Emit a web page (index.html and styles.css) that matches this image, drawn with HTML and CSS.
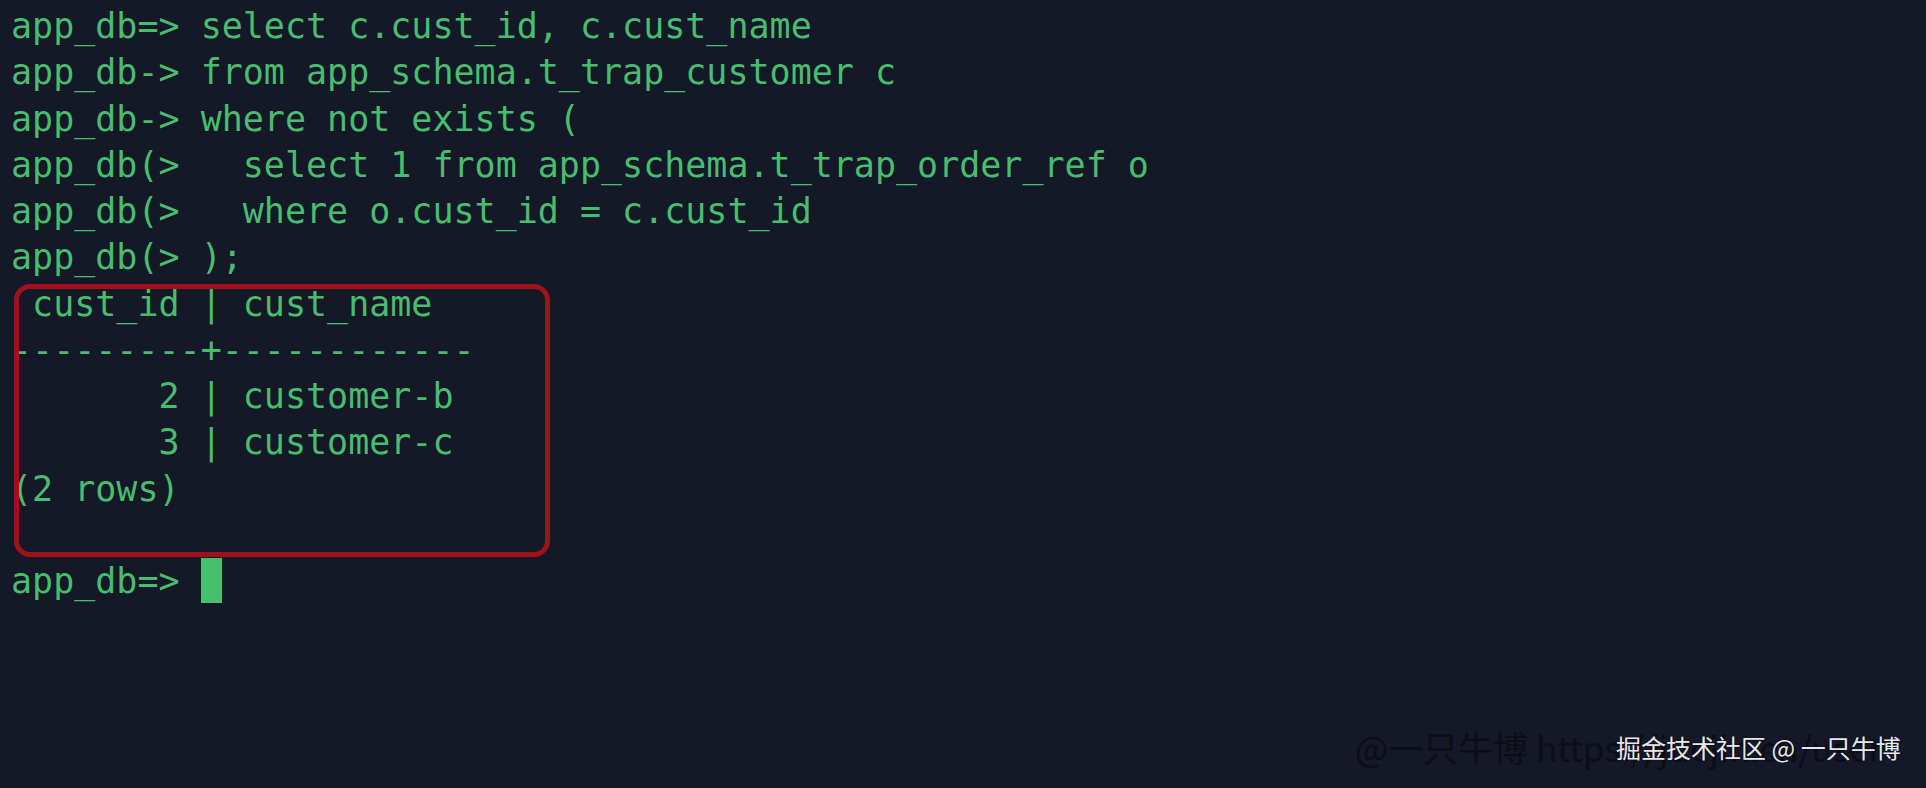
FILE: index.html
```html
<!DOCTYPE html>
<html lang="zh">
<head>
<meta charset="utf-8">
<title>psql</title>
<link rel="stylesheet" href="styles.css">
</head>
<body>
<main class="term">
<pre class="out">app_db=&gt; select c.cust_id, c.cust_name
app_db-&gt; from app_schema.t_trap_customer c
app_db-&gt; where not exists (
app_db(&gt;   select 1 from app_schema.t_trap_order_ref o
app_db(&gt;   where o.cust_id = c.cust_id
app_db(&gt; );
 cust_id | cust_name
---------+------------
       2 | customer-b
       3 | customer-c
(2 rows)

app_db=&gt; <span class="cursor"></span></pre>
<div class="highlight"></div>
<div class="wm-dark">@一只牛博 https://juejin.cn/user</div>
<div class="wm-light">掘金技术社区 @ 一只牛博</div>
</main>
</body>
</html>
```
FILE: styles.css
```css
html, body {
  margin: 0;
  padding: 0;
  background: #141827;
}
.term {
  position: relative;
  width: 1926px;
  height: 788px;
  overflow: hidden;
  background: #141827;
}
.out {
  margin: 0;
  padding: 3px 0 0 11px;
  font-family: "DejaVu Sans Mono", "Liberation Mono", monospace;
  font-size: 35px;
  line-height: 46.25px;
  color: #48bd6e;
  white-space: pre;
}
.cursor {
  display: inline-block;
  width: 21px;
  height: 45px;
  vertical-align: top;
  background: #45c06e;
}
.highlight {
  position: absolute;
  left: 14px;
  top: 284px;
  width: 536px;
  height: 273px;
  box-sizing: border-box;
  border: 5px solid #a0111b;
  border-radius: 16px;
}
.wm-dark {
  position: absolute;
  left: 1355px;
  top: 729px;
  font-family: "Noto Sans CJK SC", "Noto Sans", sans-serif;
  font-size: 35px;
  line-height: 1;
  color: #0c0d16;
  white-space: nowrap;
}
.wm-light {
  position: absolute;
  left: 1616px;
  top: 735px;
  font-family: "Noto Sans CJK SC", "Noto Sans", sans-serif;
  font-size: 25px;
  line-height: 1;
  color: #e8e8ea;
  text-shadow: 0 0 2px rgba(0, 0, 0, 0.6);
  white-space: nowrap;
}
```
